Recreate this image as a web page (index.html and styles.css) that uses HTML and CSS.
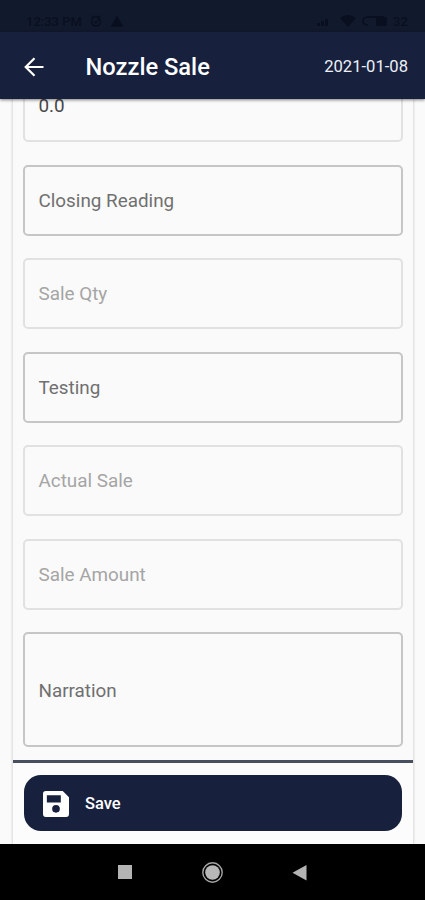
FILE: index.html
```
<!DOCTYPE html>
<html lang="en">
<head>
<meta charset="utf-8">
<title>Nozzle Sale</title>
<link rel="stylesheet" href="styles.css">
</head>
<body>
<div class="screen">
  <div class="status">
    <span class="clock">12:33 PM</span>
    <svg class="status-left" width="36" height="14" viewBox="0 0 36 14" fill="none" stroke="currentColor" stroke-width="1.5"><circle cx="6" cy="7.500" r="4.500"/><path d="M4 7l2 2 3-4M2 3l2-1M8 2l2 1"/><path d="M27 3l5 9H22zM27 6v3" fill="currentColor"/></svg>
    <svg class="status-right" width="76" height="14" viewBox="0 0 76 14" fill="currentColor"><path d="M0 12h3v-3H0zM4 12h3V7H4zM8 12h3V5H8zM23 4q8-6 16 0l-8 9z"/><path d="M51 3q-5 0-5 4t5 4" fill="none" stroke="currentColor" stroke-width="1.500"/><path d="M50 2h17v2H50z"/><rect x="59" y="3" width="11" height="9" rx="2"/></svg>
    <span class="level">32</span>
  </div>
  <header class="appbar">
    <svg class="back" width="20" height="20" viewBox="0 0 20 20" fill="none" stroke="currentColor" stroke-width="2.200"><path d="M19.500 10H2M10.500 1.200L1.700 10l8.800 8.800"/></svg>
    <h1 class="title">Nozzle Sale</h1>
    <span class="date">2021-01-08</span>
  </header>
  <main class="page">
    <div class="card">
      <form class="fields">
        <div class="field disabled value"><span>0.0</span></div>
        <div class="field"><span>Closing Reading</span></div>
        <div class="field disabled"><span>Sale Qty</span></div>
        <div class="field"><span>Testing</span></div>
        <div class="field disabled"><span>Actual Sale</span></div>
        <div class="field disabled"><span>Sale Amount</span></div>
        <div class="field tall"><span>Narration</span></div>
      </form>
      <div class="footer">
        <button class="save" type="button">
          <svg width="26" height="26" viewBox="0 0 27 27" fill="currentColor" fill-rule="evenodd"><path d="M3 0H20.500L27 6.500V24a3 3 0 0 1-3 3H3a3 3 0 0 1-3-3V3a3 3 0 0 1 3-3zM4 4.500V12H18.500V4.500zM13.500 14.500a4 4 0 1 0 0 8a4 4 0 1 0 0-8z"/></svg>
          <span>Save</span>
        </button>
      </div>
    </div>
  </main>
  <nav class="nav">
    <svg width="16" height="16" viewBox="0 0 16 16"><path d="M1 0h14v14H1z" fill="#b4b4b4"/></svg>
    <svg width="22" height="22" viewBox="0 0 22 22"><circle cx="11.500" cy="10.500" r="9.700" fill="none" stroke="#a6a6a6" stroke-width="1.400"/><circle cx="11.500" cy="10.500" r="7.300" fill="#b8b8b8"/></svg>
    <svg width="16" height="16" viewBox="0 0 16 16"><path d="M14.500 0v15.500L.5 7.800z" fill="#b4b4b4"/></svg>
  </nav>
</div>
</body>
</html>
```
FILE: styles.css
```
* { box-sizing: border-box; }
body { margin: 0; font-family: Roboto, "Liberation Sans", sans-serif; }
.screen {
  width: 425px;
  height: 900px;
  display: flex;
  flex-direction: column;
  overflow: hidden;
  background: #fafafa;
}
.status {
  flex: none;
  height: 32px;
  display: flex;
  align-items: center;
  padding: 10px 9px 0 26px;
  background: #11192d;
  color: #090f1e;
  font-size: 13px;
  font-weight: 500;
}
.clock { width: 64px; white-space: nowrap; }
.status-right { margin-left: auto; }
.level { width: 23px; }
.appbar {
  flex: none;
  height: 67px;
  display: flex;
  align-items: center;
  padding: 2px 17px 0 24px;
  background: #17213e;
  color: #fff;
  box-shadow: 0 1px 3px rgba(0, 0, 0, .5);
  z-index: 1;
}
.title {
  margin: 0 0 0 41.500px;
  font-size: 23.700px;
  font-weight: 500;
  white-space: nowrap;
}
.date { margin-left: auto; font-size: 16.600px; color: #eef0f5; }
.page { flex: 1; min-height: 0; display: flex; padding: 0 11px 0 12px; }
.card {
  flex: 1;
  display: flex;
  flex-direction: column;
  border: solid #e4e4e4;
  border-width: 0 1px;
  box-shadow: 0 0 2px rgba(0, 0, 0, .14);
}
.fields {
  flex: none;
  height: 661px;
  display: flex;
  flex-direction: column;
  justify-content: flex-end;
  gap: 22.500px;
  padding: 0 10px 12.800px;
  overflow: hidden;
}
.field {
  flex: none;
  height: 71px;
  display: flex;
  align-items: center;
  padding: 1px 0 0 13.500px;
  border: 2px solid #c6c6c6;
  border-radius: 5px;
  color: #707070;
  font-size: 18.850px;
}
.disabled { border-color: #e1e1e1; color: #a5a5a5; }
.value { color: #484848; }
.value span { line-height: 13px; margin-top: -1px; }
.tall { height: 115px; padding-top: 2px; }
.footer {
  flex: 1;
  padding: 12px 11px 0;
  border-top: 3px solid #485060;
  background: #fcfcfc;
}
.save {
  width: 100%;
  height: 56px;
  display: flex;
  align-items: center;
  gap: 16.500px;
  padding: 1px 18.500px 0;
  border: 0;
  border-radius: 17px;
  background: #17213e;
  color: #fff;
  font: 500 16.500px Roboto, "Liberation Sans", sans-serif;
}
.nav {
  flex: none;
  height: 56px;
  display: flex;
  align-items: center;
  justify-content: space-between;
  padding: 1px 117.500px 0 117px;
  background: #000;
}
```
